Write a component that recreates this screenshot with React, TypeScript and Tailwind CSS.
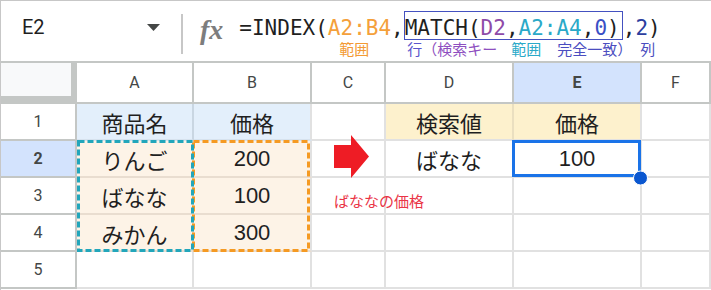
import React from 'react';

const jp = "font-['Noto_Sans_CJK_JP',sans-serif]";
const num = "font-['Liberation_Sans',Arial,sans-serif]";

const colHead = "flex items-center justify-center border-r-2 border-b-2 border-[#c4c7c5] text-[16px] text-[#444746] font-['Roboto',sans-serif]";
const rowHead = "flex items-center justify-center border-r-2 border-b-2 border-[#c4c7c5] text-[16px] text-[#444746] font-['Roboto',sans-serif]";
const cell = 'flex items-center justify-center border-r-2 border-b-2 border-[#e1e1e1] text-[22px] text-[#1f1f1f] leading-none';

function FormulaBar() {
  return (
    <div className="flex h-[62px] border-b-2 border-[#c4c7c5]">
      {/* name box */}
      <div className="flex w-[180px] items-start">
        <span className="ml-[21px] mt-[16px] text-[20px] leading-none text-[#1f1f1f] font-['Roboto',sans-serif]">E2</span>
        <svg className="ml-auto mr-[21px] mt-[23px]" width="13" height="7" viewBox="0 0 13 7">
          <polygon points="0,0 13,0 6.5,7" fill="#444746" />
        </svg>
      </div>
      <div className="mt-[13px] h-[40px] w-[2px] bg-[#c7c7c7]" />
      <span className="ml-[17px] mt-[15px] text-[28px] leading-none italic font-bold text-[#7d7d7d] font-['Liberation_Serif',serif]">fx</span>
      {/* formula + notes */}
      <div className="ml-[16px] flex flex-col">
        <div className="mt-[17px] whitespace-pre text-[21px] leading-none text-[#1f1f1f] font-['DejaVu_Sans_Mono',monospace]">
          =INDEX(<span className="text-[#f4a03a]">A2:B4</span>,
          <span className="-mt-[7px] -mb-[1px] inline-block border border-[#4451c0] pt-[6px] pr-[2px] leading-none">MATCH(<span className="text-[#8e4aa8]">D2</span>,<span className="text-[#2aa9c8]">A2:A4</span>,<span className="text-[#3a4fc5]">0</span>)</span>,<span className="text-[#2c3e9e]">2</span>)
        </div>
        <div className={`mt-[2px] ml-[100px] flex whitespace-nowrap text-[15px] leading-none ${jp}`}>
          <span className="w-[68px] text-[#f39a34]">範囲</span>
          <span className="w-[104px]"><span className="text-[#5a55cc]">行</span><span className="text-[#8e4fc0]">（検索キー</span></span>
          <span className="w-[46px] text-[#2aa9c8]">範囲</span>
          <span className="w-[83px] text-[#4b4dc0]">完全一致）</span>
          <span className="text-[#4b4dc0]">列</span>
        </div>
      </div>
    </div>
  );
}

function Sheet() {
  return (
    <div className={`grid grid-cols-[76px_117px_118px_74px_128px_128px_1fr] grid-rows-[41px_37px_37px_37px_37px_37px] ${num}`}>
      {/* header row */}
      <div className="border-r-[6px] border-b-[8px] border-[#c4c7c5] bg-[#f8f9fa]" />
      <div className={colHead}>A</div>
      <div className={colHead}>B</div>
      <div className={colHead}>C</div>
      <div className={colHead}>D</div>
      <div className={`${colHead} bg-[#d3e3fd] font-bold text-[#041e49]`}>E</div>
      <div className={colHead}>F</div>

      {/* row 1 */}
      <div className={rowHead}>1</div>
      <div className={`${cell} ${jp} bg-[#e3effb] border-r-[#c9d6e2] border-b-[#d6e2ee]`}>商品名</div>
      <div className={`${cell} ${jp} bg-[#e3effb] border-b-[#d6e2ee]`}>価格</div>
      <div className={cell} />
      <div className={`${cell} ${jp} bg-[#fdf1cd] border-r-[#eadfc0]`}>検索値</div>
      <div className={`${cell} ${jp} bg-[#fdf1cd]`}>価格</div>
      <div className={cell} />

      {/* row 2 */}
      <div className={`${rowHead} bg-[#d3e3fd] font-bold text-[#041e49]`}>2</div>
      <div className={`${cell} ${jp} bg-[#fdf3e7] border-[#e9ddd0]`}>りんご</div>
      <div className={`${cell} bg-[#fdf3e7] border-b-[#e9ddd0] text-[20px]`}>200</div>
      <div className={cell} />
      <div className={`${cell} ${jp}`}>ばなな</div>
      <div className={`${cell} text-[20px]`}>100</div>
      <div className={cell} />

      {/* row 3 */}
      <div className={rowHead}>3</div>
      <div className={`${cell} ${jp} bg-[#fdf3e7] border-[#e9ddd0]`}>ばなな</div>
      <div className={`${cell} bg-[#fdf3e7] border-b-[#e9ddd0] text-[20px]`}>100</div>
      <div className={`${cell} justify-start items-start overflow-visible`}>
        <span className={`ml-[22px] mt-[15px] whitespace-nowrap text-[15px] text-[#ea3546] ${jp}`}>ばななの価格</span>
      </div>
      <div className={cell} />
      <div className={cell} />
      <div className={cell} />

      {/* row 4 */}
      <div className={rowHead}>4</div>
      <div className={`${cell} ${jp} bg-[#fdf3e7] border-[#e9ddd0]`}>みかん</div>
      <div className={`${cell} bg-[#fdf3e7] border-b-[#e9ddd0] text-[20px]`}>300</div>
      <div className={cell} />
      <div className={cell} />
      <div className={cell} />
      <div className={cell} />

      {/* row 5 */}
      <div className={rowHead}>5</div>
      <div className={cell} />
      <div className={cell} />
      <div className={cell} />
      <div className={cell} />
      <div className={cell} />
      <div className={cell} />
    </div>
  );
}

export default function App() {
  return (
    <div className="relative h-[290px] w-[711px] overflow-hidden bg-white">
      <div className="h-full border-l border-t border-[#c7c7c7]">
        <FormulaBar />
        <Sheet />
      </div>
      {/* copy ranges, arrow and selection drawn over the grid */}
      <svg className="pointer-events-none absolute left-0 top-0" width="711" height="290">
        <rect x="193.5" y="141.5" width="115" height="109" fill="none" stroke="#f59a23" strokeWidth="3" strokeDasharray="6 3" />
        <rect x="78.5" y="141.5" width="114" height="109" fill="none" stroke="#22a6bb" strokeWidth="3" strokeDasharray="6 3" />
        <polygon points="334,145 351,145 351,135 369,156.5 351,178 351,168 334,168" fill="#ee1c25" />
        <rect x="513.5" y="141.5" width="126" height="34" fill="none" stroke="#1a73e8" strokeWidth="3" />
        <circle cx="640.5" cy="178" r="7" fill="#0b57d0" stroke="#fff" strokeWidth="1" />
      </svg>
    </div>
  );
}
